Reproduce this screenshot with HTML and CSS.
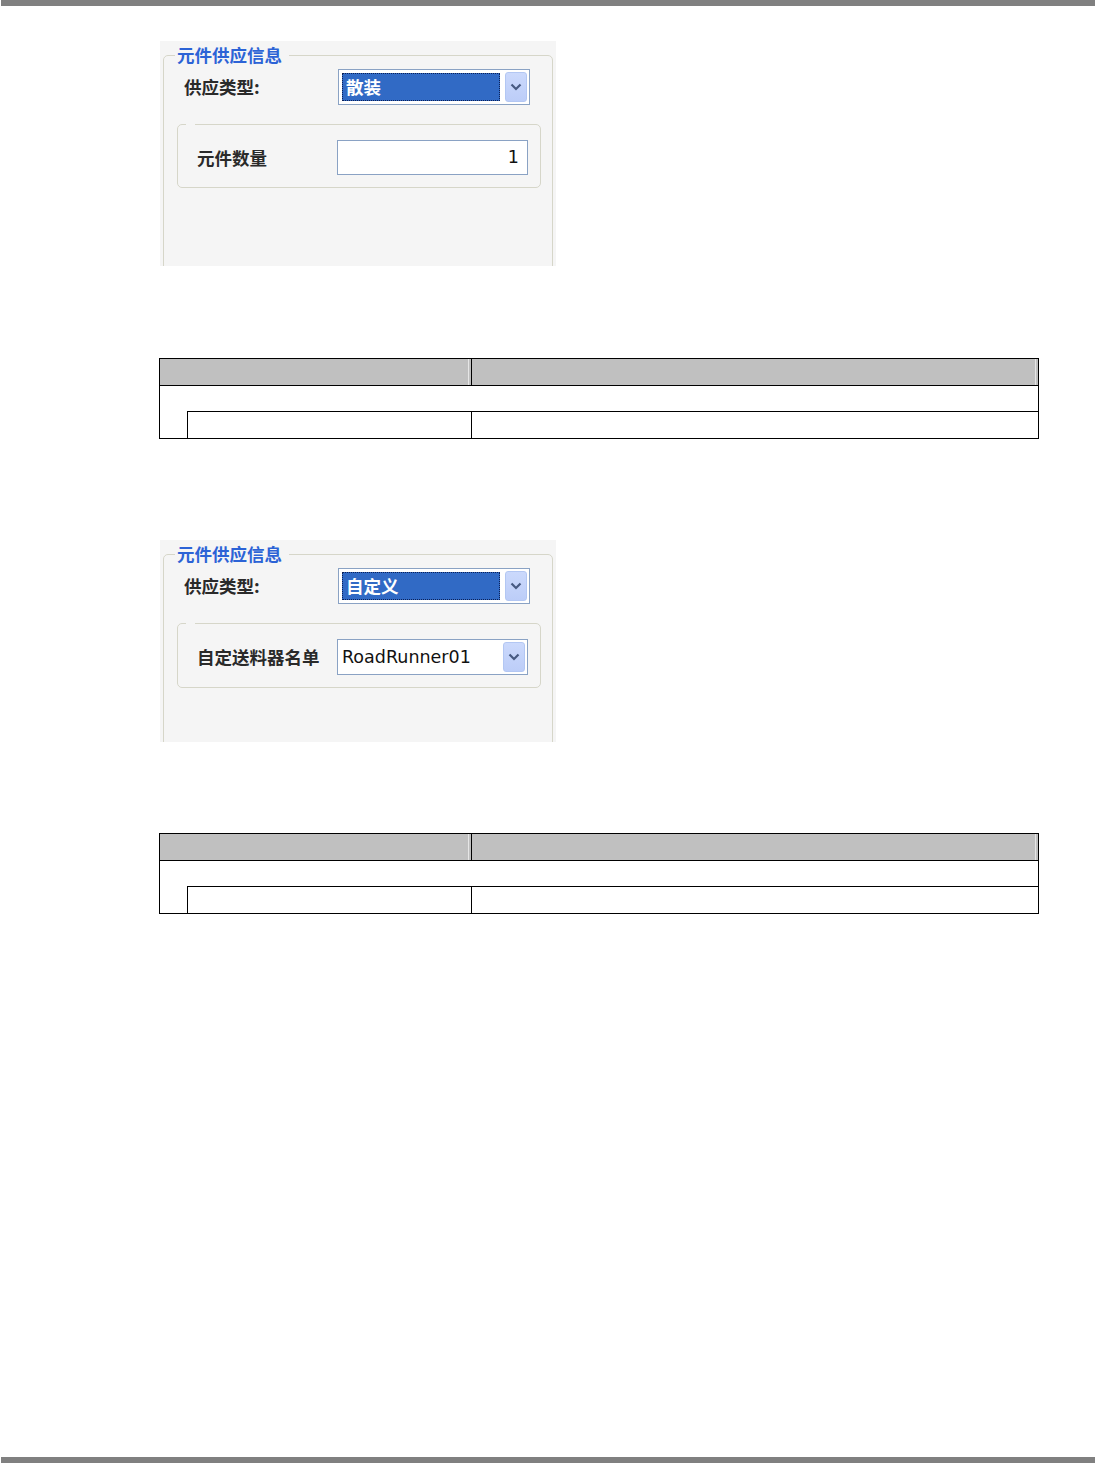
FILE: index.html
```html
<!DOCTYPE html>
<html lang="zh-CN">
<head>
  <meta charset="UTF-8">
  <title>元件供应信息</title>
  <link rel="stylesheet" href="styles.css">
</head>
<body>

<div class="rule"></div>

<div class="page">

  <div class="panel">
    <fieldset class="group">
      <legend>元件供应信息</legend>
      <div class="row">
        <span class="label">供应类型:</span>
        <div class="combo">
          <span class="combo-sel">散装</span>
          <span class="combo-btn"><svg width="12" height="8" viewBox="0 0 12 8"><path d="M1.5 1.5 L6 6 L10.5 1.5" fill="none" stroke="#475a82" stroke-width="2.2"/></svg></span>
        </div>
      </div>
      <fieldset class="sub">
        <legend></legend>
        <div class="field">
          <span class="label">元件数量</span>
          <div class="input">1</div>
        </div>
      </fieldset>
    </fieldset>
  </div>

  <table class="spec spec-1">
    <colgroup><col class="c-indent"><col class="c-name"><col class="c-desc"></colgroup>
    <tr class="head"><th colspan="2"></th><th></th></tr>
    <tr class="grp"><td class="indent" rowspan="2"></td><td class="grp-cell" colspan="2"></td></tr>
    <tr class="item"><td></td><td></td></tr>
  </table>

  <div class="panel panel-2">
    <fieldset class="group">
      <legend>元件供应信息</legend>
      <div class="row">
        <span class="label">供应类型:</span>
        <div class="combo">
          <span class="combo-sel">自定义</span>
          <span class="combo-btn"><svg width="12" height="8" viewBox="0 0 12 8"><path d="M1.5 1.5 L6 6 L10.5 1.5" fill="none" stroke="#475a82" stroke-width="2.2"/></svg></span>
        </div>
      </div>
      <fieldset class="sub">
        <legend></legend>
        <div class="field">
          <span class="label">自定送料器名单</span>
          <div class="combo combo-plain">
            <span class="combo-text">RoadRunner01</span>
            <span class="combo-btn"><svg width="12" height="8" viewBox="0 0 12 8"><path d="M1.5 1.5 L6 6 L10.5 1.5" fill="none" stroke="#475a82" stroke-width="2.2"/></svg></span>
          </div>
        </div>
      </fieldset>
    </fieldset>
  </div>

  <table class="spec spec-2">
    <colgroup><col class="c-indent"><col class="c-name"><col class="c-desc"></colgroup>
    <tr class="head"><th colspan="2"></th><th></th></tr>
    <tr class="grp"><td class="indent" rowspan="2"></td><td class="grp-cell" colspan="2"></td></tr>
    <tr class="item"><td></td><td></td></tr>
  </table>

</div>

<div class="rule rule-bottom"></div>

</body>
</html>
```

FILE: styles.css
```css
body { margin: 0; height: 1463px; display: flex; flex-direction: column; background: #fff; font-family: "Noto Sans CJK SC", sans-serif; color: #222; }
.rule { flex-shrink: 0; height: 6px; width: 1094px; margin-left: 1px; background: #808080; }
.rule-bottom { margin-top: auto; }
.page { padding-left: 159px; }

/* dialog panel */
.panel { width: 396px; height: 225px; margin: 35px 0 0 1px; padding: 4px 3px 0; box-sizing: border-box; background: #f5f5f5; overflow: hidden; }
.panel-2 { height: 202px; margin-top: 101px; }
.group { margin: 0; width: 390px; height: 400px; box-sizing: border-box; padding: 4px 0 0 13px; border: 1px solid #d6d6c9; border-radius: 5px; }
.group > legend { margin-left: -2px; padding: 0 7px 0 2px; font-size: 17.5px; line-height: 20px; font-weight: bold; color: #2c63d6; }
.label { font-size: 17.5px; line-height: 20px; font-weight: bold; color: #2a2a2a; }
.row { display: flex; align-items: center; height: 36px; padding-left: 7px; }
.row .label { width: 154px; }

/* combo box */
.combo { display: flex; align-items: center; width: 192px; height: 36px; box-sizing: border-box; padding: 0 2px 0 3px; border: 1px solid #8aa2c4; background: #fff; }
.combo-sel { width: 158px; height: 28px; box-sizing: border-box; padding-left: 3px; border: 1px dotted #0c2157; background: #316ac5; color: #fff; font-size: 17.5px; line-height: 26px; font-weight: bold; }
.combo-btn { display: flex; align-items: center; justify-content: center; width: 22px; height: 30px; margin-left: auto; box-sizing: border-box; border: 1px solid #b3c7f3; border-radius: 3px; background: linear-gradient(#cbd9fc, #bccdf8); }
.combo-plain { width: 191px; padding-left: 4px; }
.combo-text { font-family: "DejaVu Sans", sans-serif; font-size: 17.5px; color: #111; }

/* inner group */
.sub { width: 364px; margin: 19px 0 0; padding: 15px 12px 12px 19px; box-sizing: border-box; border: 1px solid #d6d6c9; border-radius: 5px; }
.sub > legend { width: 9px; height: 0; margin-left: -11px; padding: 0; }
.field { display: flex; align-items: center; }
.field .label { width: 140px; }
.input { width: 191px; height: 35px; box-sizing: border-box; padding-right: 8px; border: 1px solid #8aa2c4; background: #fff; text-align: right; font-family: "DejaVu Sans", sans-serif; font-size: 17.5px; line-height: 33px; color: #111; }

/* table */
.spec { width: 880px; margin-top: 92px; border-collapse: collapse; table-layout: fixed; }
.spec-2 { margin-top: 91px; }
.c-indent { width: 28px; }
.c-name { width: 284px; }
.spec th, .spec td { padding: 0; border: 1px solid #000; }
.spec th { background: #c0c0c0; box-shadow: inset -2px 0 #c0c0c0, inset -3px 0 #e6e6e6; }
.head { height: 27px; }
.grp { height: 26px; }
.item { height: 27px; }
.spec .indent { border-right: none; }
.spec .grp-cell { border-left: none; }
```
